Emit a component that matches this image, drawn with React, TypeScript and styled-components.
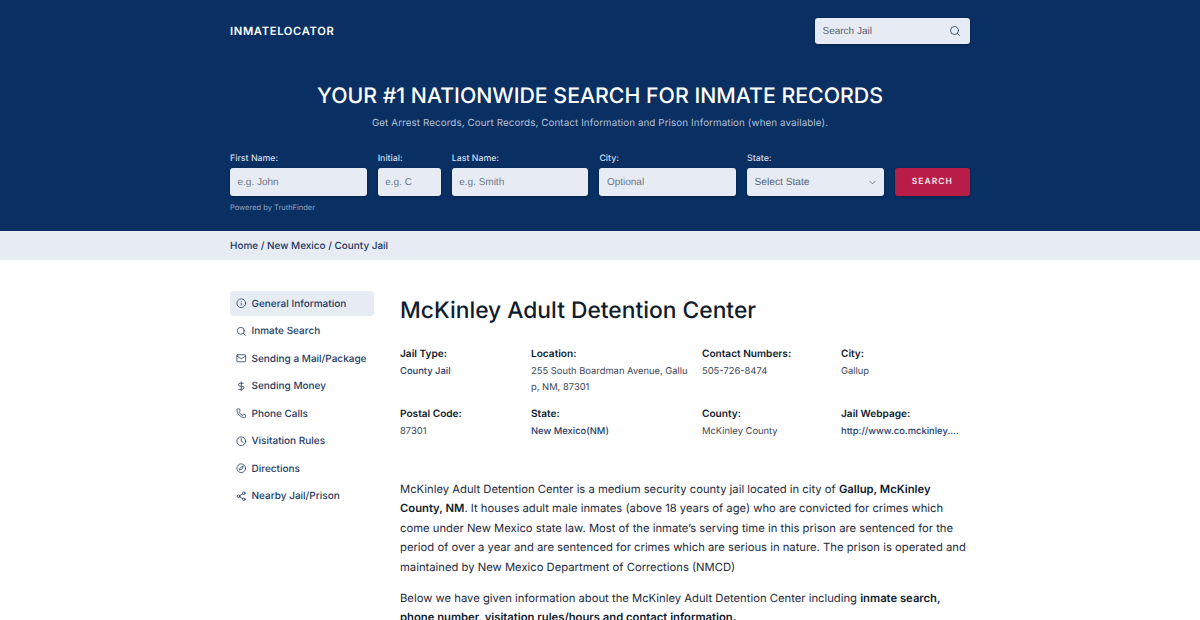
import React from 'react';
import styled, { createGlobalStyle } from 'styled-components';
import { Info, Search, Mail, DollarSign, Phone, Clock, Compass, Share2, ChevronDown } from 'lucide-react';

const GlobalStyle = createGlobalStyle`
  html, body {
    margin: 0;
    padding: 0;
    background: #fff;
    height: 620px;
    overflow: hidden;
    font-family: Inter, 'Liberation Sans', sans-serif;
    text-rendering: geometricPrecision;
  }
  * { box-sizing: border-box; }
`;

const Hero = styled.header`
  background: #0a2f63;
  height: 230.5px;
`;

const Wrap = styled.div`
  width: 740px;
  margin: 0 auto;
`;

const TopBar = styled.div`
  display: flex;
  justify-content: space-between;
  align-items: center;
  padding-top: 18px;
`;

const Logo = styled.div`
  color: #fff;
  font-size: 11.2px;
  font-weight: 600;
  letter-spacing: 0.65px;
  margin-top: -1px;
`;

const JailSearch = styled.div`
  width: 155px;
  height: 26px;
  background: #e7ecf4;
  border-radius: 3px;
  display: flex;
  align-items: center;
  justify-content: space-between;
  padding: 0 9px 0 7.5px;
  color: #566274;
  font-family: 'Liberation Sans', sans-serif;
  font-size: 10px;
  box-shadow: 0 1px 3px rgba(0, 0, 0, 0.3);
  svg { color: #1c3354; }
`;

const Title = styled.h1`
  margin: 38px 0 0;
  color: #fff;
  font-size: 21.3px;
  line-height: 28px;
  font-weight: 500;
  text-align: center;
`;

const Subtitle = styled.p`
  margin: 6px 0 0;
  color: #b3c2d8;
  font-size: 9.8px;
  line-height: 16px;
  letter-spacing: 0.1px;
  text-align: center;
`;

const SearchForm = styled.div`
  display: flex;
  align-items: flex-end;
  gap: 11px;
  margin-top: 21px;
`;

const Field = styled.div<{ $w: number }>`
  width: ${p => p.$w}px;
`;

const FieldLabel = styled.div`
  color: #d3dceb;
  font-size: 8.8px;
  font-weight: 500;
  line-height: 12px;
  margin-bottom: 3px;
`;

const FakeInput = styled.div`
  height: 28px;
  background: #e7ecf4;
  border-radius: 3px;
  display: flex;
  align-items: center;
  justify-content: space-between;
  padding: 0 6px 0 7.5px;
  color: #6c7788;
  font-family: 'Liberation Sans', sans-serif;
  font-size: 10px;
  box-shadow: 0 1px 3px rgba(0, 0, 0, 0.3);
`;

const SelectInput = styled(FakeInput)`
  color: #566274;
  font-size: 10.2px;
  svg { color: #4a5a70; }
`;

const SearchButton = styled.div`
  width: 75.2px;
  height: 28px;
  background: #b91c47;
  border-radius: 3px;
  color: #f3e3e8;
  font-size: 8.5px;
  font-weight: 600;
  letter-spacing: 1px;
  display: flex;
  align-items: center;
  justify-content: center;
  box-shadow: 0 1px 3px rgba(0, 0, 0, 0.3);
`;

const Powered = styled.div`
  color: #8fa3c0;
  font-size: 7.5px;
  line-height: 10px;
  margin-top: 6.5px;
`;

const Crumbs = styled.nav`
  background: #e7ecf4;
  height: 29.5px;
  padding-top: 1px;
  display: flex;
  align-items: center;
  color: #1a3660;
  font-size: 9.95px;
  font-weight: 500;
`;

const Main = styled.main`
  display: flex;
  gap: 26px;
  padding-top: 31.7px;
`;

const Side = styled.aside`
  width: 144px;
  flex: none;
  margin-top: -1.2px;
`;

const SideItem = styled.div<{ $active?: boolean }>`
  display: flex;
  align-items: center;
  gap: 5px;
  height: 25px;
  margin-bottom: 2.5px;
  padding: 1px 0 0 6px;
  border-radius: 3px;
  background: ${p => (p.$active ? '#e7ecf4' : 'transparent')};
  color: #1e3a63;
  font-size: 10px;
  font-weight: 500;
  white-space: nowrap;
  svg { flex: none; }
`;

const Content = styled.article`
  flex: 1;
  color: #1a2638;
`;

const Heading = styled.h2`
  margin: 3px 0 0;
  color: #0f1c2e;
  font-size: 22.8px;
  line-height: 32px;
  font-weight: 500;
`;

const Facts = styled.div`
  display: grid;
  grid-template-columns: 119px 159px 127px 1fr;
  column-gap: 12px;
  row-gap: 9px;
  margin-top: 19px;
`;

const Fact = styled.div``;

const FactLabel = styled.div`
  color: #0f1c2e;
  font-size: 10.1px;
  font-weight: 600;
  line-height: 16px;
`;

const FactValue = styled.div<{ $link?: boolean }>`
  color: ${p => (p.$link ? '#1f3d6e' : '#3a4657')};
  font-size: 9.4px;
  font-weight: ${p => (p.$link ? 500 : 400)};
  line-height: 16.5px;
  margin-top: 2px;
  word-break: break-all;
`;

const Para = styled.p`
  margin: 0 0 11px;
  font-size: 11.25px;
  line-height: 19.6px;
  color: #1e2a3c;
  b { font-weight: 600; color: #0f1c2e; }
`;

const Body = styled.div`
  margin-top: 39.5px;
`;

const sideItems = [
  { icon: Info, label: 'General Information', active: true },
  { icon: Search, label: 'Inmate Search' },
  { icon: Mail, label: 'Sending a Mail/Package' },
  { icon: DollarSign, label: 'Sending Money' },
  { icon: Phone, label: 'Phone Calls' },
  { icon: Clock, label: 'Visitation Rules' },
  { icon: Compass, label: 'Directions' },
  { icon: Share2, label: 'Nearby Jail/Prison' },
];

const facts = [
  { label: 'Jail Type:', value: 'County Jail', link: true },
  { label: 'Location:', value: '255 South Boardman Avenue, Gallup, NM, 87301' },
  { label: 'Contact Numbers:', value: '505-726-8474' },
  { label: 'City:', value: 'Gallup' },
  { label: 'Postal Code:', value: '87301' },
  { label: 'State:', value: 'New Mexico(NM)', link: true },
  { label: 'County:', value: 'McKinley County' },
  { label: 'Jail Webpage:', value: 'http://www.co.mckinley....', link: true },
];

export default function App() {
  return (
    <>
      <GlobalStyle />
      <Hero>
        <Wrap>
          <TopBar>
            <Logo>INMATELOCATOR</Logo>
            <JailSearch>
              Search Jail
              <Search size={12} strokeWidth={1.6} />
            </JailSearch>
          </TopBar>
          <Title>YOUR #1 NATIONWIDE SEARCH FOR INMATE RECORDS</Title>
          <Subtitle>Get Arrest Records, Court Records, Contact Information and Prison Information (when available).</Subtitle>
          <SearchForm>
            <Field $w={136.7}>
              <FieldLabel>First Name:</FieldLabel>
              <FakeInput>e.g. John</FakeInput>
            </Field>
            <Field $w={63}>
              <FieldLabel>Initial:</FieldLabel>
              <FakeInput>e.g. C</FakeInput>
            </Field>
            <Field $w={136.7}>
              <FieldLabel>Last Name:</FieldLabel>
              <FakeInput>e.g. Smith</FakeInput>
            </Field>
            <Field $w={136.7}>
              <FieldLabel>City:</FieldLabel>
              <FakeInput>Optional</FakeInput>
            </Field>
            <Field $w={136.7}>
              <FieldLabel>State:</FieldLabel>
              <SelectInput>
                Select State
                <ChevronDown size={11} strokeWidth={1.6} />
              </SelectInput>
            </Field>
            <SearchButton>SEARCH</SearchButton>
          </SearchForm>
          <Powered>Powered by TruthFinder</Powered>
        </Wrap>
      </Hero>
      <Crumbs>
        <Wrap>Home / New Mexico / County Jail</Wrap>
      </Crumbs>
      <Wrap>
        <Main>
          <Side>
            {sideItems.map(item => (
              <SideItem key={item.label} $active={item.active}>
                <item.icon size={10.5} strokeWidth={1.8} />
                {item.label}
              </SideItem>
            ))}
          </Side>
          <Content>
            <Heading>McKinley Adult Detention Center</Heading>
            <Facts>
              {facts.map(f => (
                <Fact key={f.label}>
                  <FactLabel>{f.label}</FactLabel>
                  <FactValue $link={f.link}>{f.value}</FactValue>
                </Fact>
              ))}
            </Facts>
            <Body>
              <Para>
                McKinley Adult Detention Center is a medium security county jail located in city of <b>Gallup, McKinley County, NM</b>. It houses adult male inmates (above 18 years of age) who are convicted for crimes which come under New Mexico state law. Most of the inmate’s serving time in this prison are sentenced for the period of over a year and are sentenced for crimes which are serious in nature. The prison is operated and maintained by New Mexico Department of Corrections (NMCD)
              </Para>
              <Para>
                Below we have given information about the McKinley Adult Detention Center including <b>inmate search, phone number, visitation rules/hours and contact information.</b>
              </Para>
            </Body>
          </Content>
        </Main>
      </Wrap>
    </>
  );
}
